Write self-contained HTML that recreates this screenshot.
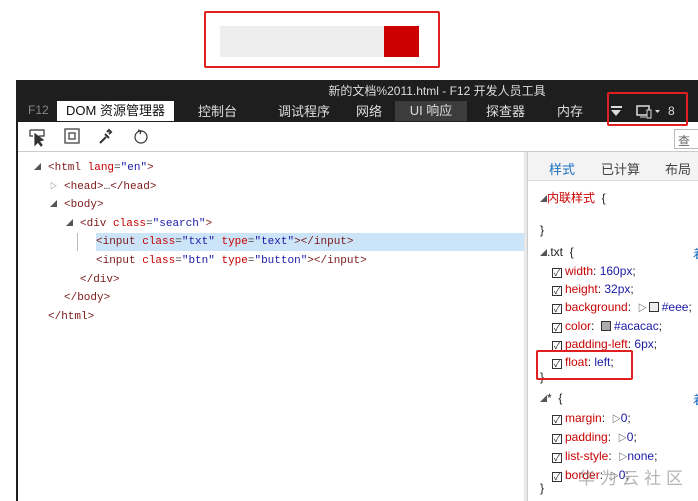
<!DOCTYPE html>
<html><head><meta charset="utf-8"><style>
*{margin:0;padding:0;box-sizing:border-box}
body{width:698px;height:501px;overflow:hidden;background:#fff;position:relative;font-family:"Liberation Sans","Noto Sans CJK SC",sans-serif}
.a{position:absolute}
.m{font-family:"Liberation Mono","Noto Sans CJK SC",monospace;font-size:11px;white-space:nowrap}
.t{color:#7a1a1a}.at{color:#c80000}.v{color:#1a1aa6}.tg{color:#444}
.r{font-size:12px;white-space:nowrap;color:#222}
.p{color:#c80000}.pv{color:#1a1aa6}
.tri{font-size:7px;color:#555;display:inline-block;width:14px;vertical-align:1px}
.cb{display:inline-block;width:10px;height:10px;border:1px solid #333;vertical-align:-1px;margin-right:3px;font-size:9px;line-height:8px;text-align:center}
</style></head><body>
<div class="a" style="left:204px;top:11px;width:236px;height:57px;border:2px solid #e02020;border-radius:2px"></div>
<div class="a" style="left:220px;top:26px;width:164px;height:31px;background:#eee"></div>
<div class="a" style="left:384px;top:26px;width:35px;height:31px;background:#cc0000"></div>

<div class="a" style="left:16px;top:80px;width:682px;height:42px;background:#1e1e1e"></div>
<div class="a" style="left:16px;top:82px;width:682px;text-align:center;color:#ddd;font-size:12px;padding-left:160px">新的文档%2011.html - F12 开发人员工具</div>
<div class="a" style="left:28px;top:103px;color:#888;font-size:12px">F12</div>
<div class="a" style="left:57px;top:101px;width:117px;height:20px;background:#fff;color:#111;font-size:13px;text-align:center;line-height:19px">DOM 资源管理器</div>
<div class="a" style="left:198px;top:101px;color:#ddd;font-size:13px">控制台</div>
<div class="a" style="left:278px;top:101px;color:#ddd;font-size:13px">调试程序</div>
<div class="a" style="left:356px;top:101px;color:#ddd;font-size:13px">网络</div>
<div class="a" style="left:395px;top:101px;width:72px;height:20px;background:#3c3c3c;color:#ddd;font-size:13px;text-align:center;line-height:19px">UI 响应</div>
<div class="a" style="left:486px;top:101px;color:#ddd;font-size:13px">探查器</div>
<div class="a" style="left:557px;top:101px;color:#ddd;font-size:13px">内存</div>
<div class="a" style="left:611px;top:106px;width:11px;height:2px;background:#ddd"></div>
<div class="a" style="left:611px;top:110px;width:0;height:0;border-left:5.5px solid transparent;border-right:5.5px solid transparent;border-top:6px solid #ddd"></div>
<svg class="a" style="left:636px;top:104px" width="28" height="16"><rect x="1" y="2" width="12" height="9" fill="none" stroke="#ddd" stroke-width="1.5"/><rect x="11" y="6" width="4" height="8" fill="#1e1e1e" stroke="#ddd"/><line x1="4" y1="13" x2="10" y2="13" stroke="#ddd"/><path d="M19 6h5l-2.5 3z" fill="#ddd"/></svg>
<div class="a" style="left:668px;top:104px;color:#ddd;font-size:12px">8</div>
<div class="a" style="left:607px;top:92px;width:81px;height:34px;border:2px solid #e02020;border-radius:2px"></div>

<div class="a" style="left:16px;top:80px;width:2px;height:421px;background:#1e1e1e"></div>
<div class="a" style="left:18px;top:151px;width:680px;height:1px;background:#ccc"></div>
<svg class="a" style="left:28px;top:127px" width="130" height="20" fill="none" stroke="#333" stroke-width="1.2">
<path d="M2 3h14v6h-5"/><path d="M2 3v6h3"/><path d="M7 7l0 11 3-3 3 4 1-1-3-4 4-1z" fill="#333"/>
<rect x="37" y="2" width="14" height="14"/><rect x="41" y="6" width="6" height="6"/>
<path d="M72 16l6-6M77 7l4 4M79 5l2-2 2 2-2 2" stroke-width="2"/>
<circle cx="113" cy="10" r="6"/><path d="M110 3l3 1-1 3"/></svg>
<div class="a" style="left:674px;top:129px;width:30px;height:20px;border:1px solid #bbb;font-size:12px;color:#666;padding:2px 3px">查找</div>

<div class="a" style="left:96px;top:233px;width:428px;height:18px;background:#cce4f7"></div>
<div class="a" style="left:77px;top:233px;width:1px;height:18px;background:#bbb"></div>
<div class="a" style="left:524px;top:152px;width:4px;height:349px;background:#e8e8e8"></div>
<div class="a" style="left:527px;top:152px;width:1px;height:349px;background:#ccc"></div>
<div class="a m tg" style="left:34px;top:159px;line-height:18.6px">
<div><span class="tri">◢</span><span class="t">&lt;html</span> <span class="at">lang</span>=<span class="v">"en"</span><span class="t">&gt;</span></div>
<div style="padding-left:16px"><span class="tri">▷</span><span class="t">&lt;head&gt;</span>…<span class="t">&lt;/head&gt;</span></div>
<div style="padding-left:16px"><span class="tri">◢</span><span class="t">&lt;body&gt;</span></div>
<div style="padding-left:32px"><span class="tri">◢</span><span class="t">&lt;div</span> <span class="at">class</span>=<span class="v">"search"</span><span class="t">&gt;</span></div>
<div style="padding-left:62px"><span class="t">&lt;input</span> <span class="at">class</span>=<span class="v">"txt"</span> <span class="at">type</span>=<span class="v">"text"</span><span class="t">&gt;&lt;/input&gt;</span></div>
<div style="padding-left:62px"><span class="t">&lt;input</span> <span class="at">class</span>=<span class="v">"btn"</span> <span class="at">type</span>=<span class="v">"button"</span><span class="t">&gt;&lt;/input&gt;</span></div>
<div style="padding-left:46px"><span class="t">&lt;/div&gt;</span></div>
<div style="padding-left:30px"><span class="t">&lt;/body&gt;</span></div>
<div style="padding-left:14px"><span class="t">&lt;/html&gt;</span></div>
</div>

<div class="a" style="left:528px;top:152px;width:170px;height:29px;background:#f3f3f3;border-bottom:1px solid #ddd"></div>
<div class="a" style="left:549px;top:159px;font-size:13px;color:#1a6fc0">样式</div>
<div class="a" style="left:601px;top:159px;font-size:13px;color:#444">已计算</div>
<div class="a" style="left:665px;top:159px;font-size:13px;color:#444">布局</div>

<div class="a r" style="left:540px;top:189px"><span class="tri" style="width:7px">◢</span><span class="p">内联样式</span> &nbsp;{</div>
<div class="a r" style="left:540px;top:223px">}</div>
<div class="a r" style="left:540px;top:245px"><span class="tri" style="width:7px">◢</span>.txt &nbsp;{</div>
<div class="a r" style="left:552px;top:262px;line-height:18.1px">
<div><span class="cb">✓</span><span class="p">width</span>: <span class="pv">160px</span>;</div>
<div><span class="cb">✓</span><span class="p">height</span>: <span class="pv">32px</span>;</div>
<div><span class="cb">✓</span><span class="p">background</span>: &nbsp;<span style="font-size:9px">▷</span><span class="cb" style="background:#eee;margin-left:2px"></span><span class="pv">#eee</span>;</div>
<div><span class="cb">✓</span><span class="p">color</span>: &nbsp;<span class="cb" style="background:#acacac"></span><span class="pv">#acacac</span>;</div>
<div><span class="cb">✓</span><span class="p">padding-left</span>: <span class="pv">6px</span>;</div>
<div><span class="cb">✓</span><span class="p">float</span>: <span class="pv">left</span>;</div>
</div>
<div class="a r" style="left:540px;top:370px">}</div>
<div class="a r" style="left:540px;top:391px"><span class="tri" style="width:7px">◢</span>* &nbsp;{</div>
<div class="a r" style="left:552px;top:409px;line-height:18.1px">
<div><span class="cb">✓</span><span class="p">margin</span>: &nbsp;<span style="font-size:9px">▷</span><span class="pv">0</span>;</div>
<div><span class="cb">✓</span><span class="p">padding</span>: &nbsp;<span style="font-size:9px">▷</span><span class="pv">0</span>;</div>
<div><span class="cb">✓</span><span class="p">list-style</span>: &nbsp;<span style="font-size:9px">▷</span><span class="pv">none</span>;</div>
<div><span class="cb">✓</span><span class="p">border</span>: &nbsp;<span style="font-size:9px">▷</span><span class="pv">0</span>;</div>
</div>
<div class="a r" style="left:540px;top:481px">}</div>
<div class="a r" style="left:693px;top:245px;color:#1a6fc0">着</div>
<div class="a r" style="left:693px;top:391px;color:#1a6fc0">着</div>
<div class="a" style="left:536px;top:350px;width:97px;height:30px;border:2px solid #e02020;border-radius:2px"></div>
<div class="a" style="left:578px;top:464px;font-size:17px;color:rgba(120,120,120,.55);letter-spacing:5px">华为云社区</div>
</body></html>
